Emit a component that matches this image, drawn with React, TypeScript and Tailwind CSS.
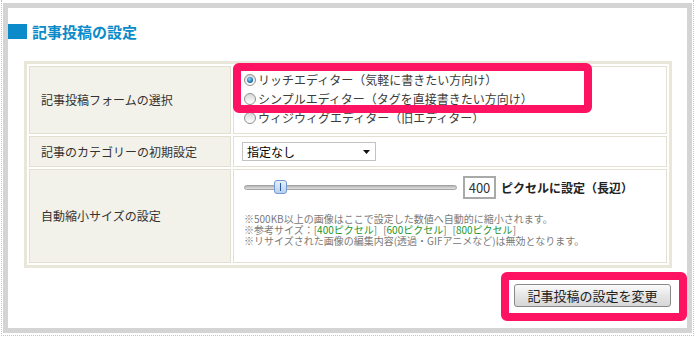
import React from "react";

interface RadioProps {
  checked?: boolean;
  label: string;
}

function Radio({ checked, label }: RadioProps) {
  return (
    <label className="flex h-[19px] items-center gap-[2px]">
      <span className="flex h-[12px] w-[12px] items-center justify-center rounded-full border border-[#8d8f91] bg-[linear-gradient(to_bottom,#d9d9d9,#ffffff)]">
        {checked && (
          <span className="h-[6px] w-[6px] rounded-full bg-[radial-gradient(circle_at_40%_35%,#8fd6ff,#0c5f9c_75%)]" />
        )}
      </span>
      <span>{label}</span>
    </label>
  );
}

function Slider() {
  return (
    <div className="relative h-[5px] w-[213px] rounded-full border border-[#a3a3a3] bg-[linear-gradient(to_bottom,#b5b5b5,#e2e2e2)]">
      {/* Thumb */}
      <div className="absolute left-[29px] top-[-6px] flex h-[14px] w-[13px] items-center justify-center rounded-[3px] border border-[#7299d1] bg-[linear-gradient(to_bottom,#e6effa,#b9d0ee)]">
        <span className="h-[8px] w-px bg-[#2d5ea9]" />
      </div>
    </div>
  );
}

function LabelCell({ children }: { children: React.ReactNode }) {
  return (
    <div className="flex items-center border border-[#e3e0d1] bg-[#f2f1ea] pl-[11px] text-[12px] text-[#333]">
      {children}
    </div>
  );
}

export default function App() {
  return (
    <div className="h-[337px] w-[694px] bg-white font-['Noto_Sans_CJK_JP',sans-serif]">
      <div className="ml-px w-[693px] border-x border-b border-dotted border-[#c4c4c4] px-px pb-[2px] pt-[3px]">
        <div className="relative h-[330px] border-[5px] border-[#d4d4d4] bg-white">
          {/* Heading */}
          <h2 className="mt-[16px] border-l-[19px] border-[#0b8bc9] pl-[5px] text-[15px] font-bold leading-[15px] text-[#0b8bc9]">
            記事投稿の設定
          </h2>

          {/* Settings table */}
          <div className="ml-[16px] mt-[22px] grid w-[648px] grid-cols-[202px_1fr] grid-rows-[68px_31px_94px] gap-[2px] border-[3px] border-[#e9e7da] p-[2px]">
            <LabelCell>記事投稿フォームの選択</LabelCell>
            <div className="flex flex-col justify-center border border-[#e3e0d1] bg-white pb-[2px] pl-[10px] text-[12px] text-[#3c3c3c]">
              <Radio checked label="リッチエディター（気軽に書きたい方向け）" />
              <Radio label="シンプルエディター（タグを直接書きたい方向け）" />
              <Radio label="ウィジウィグエディター（旧エディター）" />
            </div>

            <LabelCell>記事のカテゴリーの初期設定</LabelCell>
            <div className="flex items-center border border-[#e3e0d1] bg-white pl-[8px]">
              <div className="flex h-[19px] w-[134px] items-center justify-between border border-[#c2c2c2] pl-[4px] pr-[5px] text-[12px] text-black">
                <span>指定なし</span>
                <svg width="7" height="4" viewBox="0 0 7 4">
                  <path d="M0 0h7L3.5 4z" fill="#111" />
                </svg>
              </div>
            </div>

            <LabelCell>自動縮小サイズの設定</LabelCell>
            <div className="border border-[#e3e0d1] bg-white pl-[10px] pt-[6px]">
              <div className="flex items-center">
                <Slider />
                <div className="ml-[6px] flex h-[23px] w-[33px] items-center justify-center border-2 border-[#a9a9a9] text-[13px] text-[#333]">
                  400
                </div>
                <span className="ml-[5px] text-[12px] font-bold text-[#222]">
                  ピクセルに設定（長辺）
                </span>
              </div>
              <div className="mt-[14px] text-[10px] leading-[11px] text-[#7a7a7a]">
                <p>※500KB以上の画像はここで設定した数値へ自動的に縮小されます。</p>
                <p>
                  ※参考サイズ：[<span className="text-[#23962a]">400ピクセル</span>]
                  <span className="ml-[6px]">[</span>
                  <span className="text-[#23962a]">600ピクセル</span>]
                  <span className="ml-[6px]">[</span>
                  <span className="text-[#23962a]">800ピクセル</span>]
                </p>
                <p>※リサイズされた画像の編集内容(透過・GIFアニメなど)は無効となります。</p>
              </div>
            </div>
          </div>

          {/* Submit */}
          <div className="ml-[16px] mt-[16px] flex w-[648px] justify-end pr-px">
            <button className="h-[23px] w-[157px] rounded-[3px] border border-[#8a8a8a] bg-[linear-gradient(to_bottom,#fbfbfb,#e6e6e6_50%,#d6d6d6)] text-[13px] text-[#222]">
              記事投稿の設定を変更
            </button>
          </div>

          {/* Highlight boxes */}
          <div className="pointer-events-none absolute left-[225px] top-[55px] h-[50px] w-[359px] rounded-[6px] border-[8px] border-[#fe1262]" />
          <div className="pointer-events-none absolute left-[493px] top-[264px] h-[49px] w-[186px] rounded-[6px] border-[8px] border-[#fe1262]" />
        </div>
      </div>
    </div>
  );
}
